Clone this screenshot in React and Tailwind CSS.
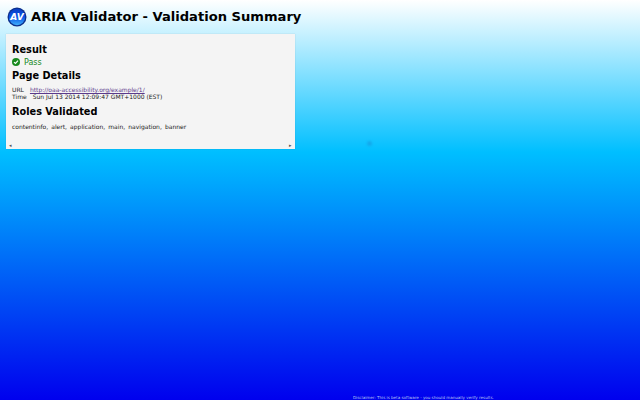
const Logo = () => (
  <svg width="20" height="20" viewBox="0 0 20 20" className="shrink-0">
    <defs>
      <linearGradient id="avfill" x1="0" y1="0" x2="0" y2="1">
        <stop offset="0" stopColor="#0a3fc4" />
        <stop offset="0.5" stopColor="#0a52e8" />
        <stop offset="1" stopColor="#3fb0fa" />
      </linearGradient>
    </defs>
    <circle cx="10" cy="10" r="9.5" fill="#0b2f8c" />
    <circle cx="10" cy="10" r="8.2" fill="url(#avfill)" />
    <text x="10" y="13" textAnchor="middle" fontSize="9" fontWeight="700" fontStyle="italic" fill="#fff" fontFamily="'DejaVu Sans', sans-serif">AV</text>
  </svg>
)

const PassIcon = () => (
  <svg width="8" height="8" viewBox="0 0 8 8" className="shrink-0">
    <circle cx="4" cy="4" r="4" fill="#178a1e" />
    <path d="M2 4.1 L3.5 5.5 L6 2.7" fill="none" stroke="#fff" strokeWidth="1.2" />
  </svg>
)

export default function App() {
  return (
    <div className="h-[400px] w-[640px] overflow-hidden flex flex-col relative font-['DejaVu_Sans',sans-serif] text-black bg-[linear-gradient(to_bottom,#ffffff_0%,#00bfff_38%,#0000ee_100%)]">
      <header className="flex items-center gap-[4px] pl-[7px] h-[34px]">
        <Logo />
        <h1 className="text-[13.1px] font-bold leading-none">ARIA Validator - Validation Summary</h1>
      </header>

      <main className="ml-[6px] w-[288.5px] h-[115px] bg-[#f4f4f4] shadow-[0_0_1px_rgba(0,0,0,0.2)] px-[6px] pt-[10px] flex flex-col relative">
        <h2 className="text-[9.75px] font-bold leading-[12px]">Result</h2>
        <div className="flex items-center gap-[4px] mt-[1px] text-[8px] leading-[10px] text-[#178a1e]">
          <PassIcon />
          <span className="translate-y-[0.5px]">Pass</span>
        </div>
        <h2 className="text-[9.75px] font-bold leading-[12px] mt-[3px]">Page Details</h2>
        <div className="mt-[4px] text-[6px] leading-[7px] text-[#222]">
          <div className="flex gap-[6px]">
            <span>URL</span>
            <a href="#" className="underline text-[#5b3a8c]">http://oaa-accessibility.org/example/1/</a>
          </div>
          <div className="flex gap-[6px]">
            <span>Time</span>
            <span>Sun Jul 13 2014 12:09:47 GMT+1000 (EST)</span>
          </div>
        </div>
        <h2 className="text-[9.75px] font-bold leading-[12px] mt-[6px]">Roles Validated</h2>
        <p className="mt-[5px] text-[6px] leading-[8px] text-[#222] [word-spacing:1.2px]">contentinfo, alert, application, main, navigation, banner</p>
        <div className="absolute bottom-[1px] left-[3px] right-[3px] flex justify-between text-[5px] leading-[6px] text-[#555]">
          <span>◂</span>
          <span>▸</span>
        </div>
      </main>

      {/* faint busy spinner left over the page */}
      <div className="absolute left-[367px] top-[141px] size-[5px] rounded-full bg-[#1a8fd8] opacity-50 blur-[1px]" />

      <footer className="mt-auto h-[5px] pl-[353px] text-[4.05px] leading-[5px] text-[#b4c2f2] whitespace-nowrap">
        Disclaimer: This is beta software - you should manually verify results.
      </footer>
    </div>
  )
}
